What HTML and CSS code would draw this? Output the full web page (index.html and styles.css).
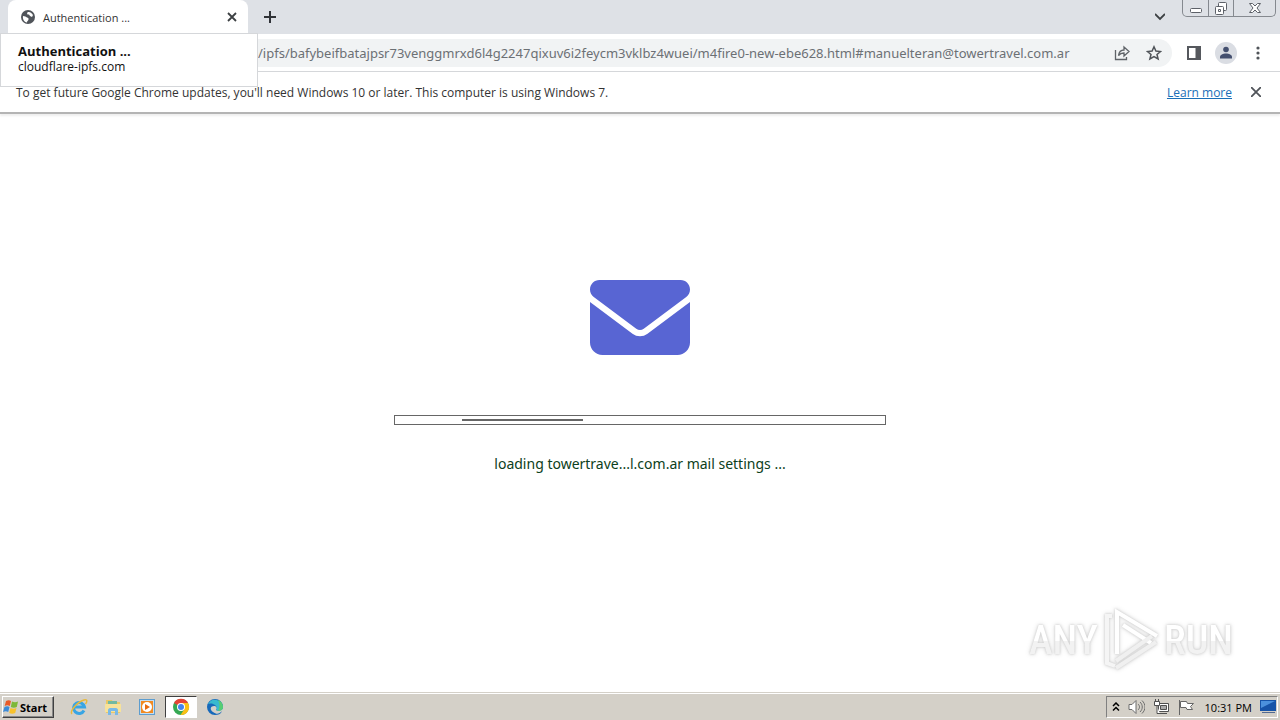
FILE: index.html
```html
<!DOCTYPE html>
<html lang="en">
<head>
  <meta charset="UTF-8">
  <meta name="viewport" content="width=device-width, initial-scale=1.0">
  <title>Authentication ...</title>
  <link rel="stylesheet" href="styles.css">
</head>
<body>
  <header class="browser">
    <div class="tab-strip">
      <div class="tab">
        <svg class="icon-14" viewBox="0 0 14 14"><circle cx="7" cy="7" r="7" fill="#50545a"/><path d="M2 6c2 0 3 1 4 1.500s2 .5 1.500 2S6 11 6 12.500C3 12 1.500 9 2 6zM7 2c2-.5 4 1 5 3l-1 2-2-1-1-1.500H6.500L6 3z" fill="#fff"/></svg>
        <span class="tab-title">Authentication ...</span>
        <button class="icon-btn" aria-label="Close tab"><svg class="icon-10" viewBox="0 0 10 10"><path d="M1 1l8 8M9 1L1 9" stroke="#3c4043" stroke-width="1.800"/></svg></button>
      </div>
      <button class="icon-btn new-tab" aria-label="New tab"><svg class="icon-14" viewBox="0 0 14 14"><path d="M7 1v12M1 7h12" stroke="#303338" stroke-width="2"/></svg></button>
      <button class="icon-btn tab-search" aria-label="Search tabs"><svg class="icon-10" viewBox="0 0 10 10"><path d="M0 2l5 5 5-5" fill="none" stroke="#3c4043" stroke-width="1.800"/></svg></button>
      <div class="window-controls">
        <button aria-label="Minimize"><svg width="14" height="14" viewBox="0 0 14 14"><rect x="1.500" y="7.500" width="11" height="4" rx="1" fill="#fff" stroke="#5d6168"/></svg></button>
        <button aria-label="Restore"><svg width="14" height="14" viewBox="0 0 14 14"><g fill="#fff" stroke="#5d6168"><rect x="4.500" y="1.500" width="8" height="8" rx="1"/><rect x="1.500" y="5.500" width="8" height="8" rx="1"/><path d="M4.500 8.500h2v2h-2z"/></g></svg></button>
        <button class="wide" aria-label="Close"><svg width="14" height="14" viewBox="0 0 14 14"><path d="M1.500 2.500h3L7 5l2.500-2.500h3L9 7l3.500 4.500h-3L7 9l-2.500 2.500h-3L5 7z" fill="#fff" stroke="#5d6168"/></svg></button>
      </div>
    </div>
    <div class="toolbar">
      <div class="omnibox">
        <input type="text" class="url" aria-label="Address" value="/ipfs/bafybeifbatajpsr73venggmrxd6l4g2247qixuv6i2feycm3vklbz4wuei/m4fire0-new-ebe628.html#manuelteran@towertravel.com.ar">
        <button class="icon-btn" aria-label="Share"><svg class="icon-16" viewBox="0 0 16 16" fill="none" stroke="#5f6368" stroke-width="1.300"><path d="M1.500 5v9.500h11V12"/><path d="M4.500 10.500C5 7 7 5 10 5V2l5 4.500-5 4.500V8c-2.500 0-4 .5-5.500 2.500z"/></svg></button>
        <button class="icon-btn" aria-label="Bookmark this page"><svg class="icon-16" viewBox="0 0 16 16"><path d="M8 1.800l1.900 4.300 4.600.4-3.500 3 1.100 4.500L8 11.600 3.900 14 5 9.500l-3.500-3 4.600-.4z" fill="none" stroke="#505459" stroke-width="1.500"/></svg></button>
      </div>
      <div class="toolbar-actions">
        <button class="icon-btn" aria-label="Side panel"><svg class="icon-14" viewBox="0 0 14 14"><path d="M0 0h14v14H0zM2 2v10h6.500V2z" fill="#55585d" fill-rule="evenodd"/></svg></button>
        <button class="icon-btn" aria-label="Profile"><svg class="icon-22" viewBox="0 0 22 22"><circle cx="11" cy="11" r="11" fill="#dadde3"/><circle cx="11" cy="7.500" r="2.800" fill="#44506f"/><path d="M5 16.500v-1.500c0-2 3-3.500 6-3.500s6 1.500 6 3.500v1.500z" fill="#44506f"/></svg></button>
        <button class="icon-btn" aria-label="Menu"><svg class="icon-14" viewBox="0 0 14 14" fill="#505459"><circle cx="7" cy="2" r="1.600"/><circle cx="7" cy="7" r="1.600"/><circle cx="7" cy="12" r="1.600"/></svg></button>
      </div>
    </div>
    <div class="infobar">
      <span>To get future Google Chrome updates, you'll need Windows 10 or later. This computer is using Windows 7.</span>
      <a href="#">Learn more</a>
      <button class="icon-btn" aria-label="Dismiss"><svg class="icon-10" viewBox="0 0 10 10"><path d="M0 0l10 10M10 0L0 10" stroke="#505459" stroke-width="1.800"/></svg></button>
    </div>
    <div class="tab-card">
      <strong>Authentication ...</strong>
      <span>cloudflare-ipfs.com</span>
    </div>
  </header>

  <main class="page">
    <svg class="envelope" viewBox="0 64 512 384" fill="#5865d3"><path d="M48 64C21.500 64 0 85.500 0 112c0 15.100 7.100 29.300 19.200 38.400L236.800 313.600c11.400 8.500 27 8.500 38.400 0L492.800 150.400c12.100-9.100 19.200-23.300 19.200-38.400 0-26.500-21.500-48-48-48H48zM0 176v208c0 35.300 28.700 64 64 64h384c35.300 0 64-28.700 64-64V176L294.400 339.200c-22.800 17.100-54 17.100-76.800 0L0 176z"/></svg>
    <div class="progress"><div class="progress-bar"></div></div>
    <p class="status">loading towertrave...l.com.ar mail settings ...</p>
    <div class="watermark">
      <span>ANY</span>
      <svg width="58" height="64" viewBox="0 0 58 64" fill="none" stroke-width="4"><path d="M10 8H5v47l8 3" stroke="#f5f5f5"/><path d="M15 46V4l40 24" stroke="#fff"/><path d="M21 17l28 18" stroke="#fff"/><path d="M54 34L14 60M50 28L14 53" stroke="#f0f0f0"/></svg>
      <span>RUN</span>
    </div>
  </main>

  <footer class="taskbar">
    <button class="start"><svg width="17" height="16" viewBox="0 0 17 16"><path d="M3 2c2-1 3.500-1 5 0L6.800 7C5 6 3.500 6 1.700 7z" fill="#ea5b28"/><path d="M9 2.500c2 1 4 1 6 0L13.800 8c-2 1-4 1-6 0z" fill="#7db83a"/><path d="M1.500 8c2-1 3.500-1 5 0l-1.300 5C3.500 12 2 12 0 13z" fill="#3c8bd8"/><path d="M7.500 9c2 1 4 1 6 0l-1.300 5c-2 1-4 1-6 0z" fill="#f8c22c"/></svg>Start</button>
    <div class="quick-launch">
      <button aria-label="Internet Explorer"><svg width="18" height="18" viewBox="0 0 18 18" fill="none"><path d="M14 12.500A5.500 5.500 0 1 1 14.500 9H4" stroke="#38a5e4" stroke-width="3"/><path d="M2 16C-1 14 7 4 14 2c4-1 3 2 1.500 4" stroke="#e8b93b" stroke-width="1.500"/></svg></button>
      <button aria-label="Explorer"><svg width="18" height="18" viewBox="0 0 18 18"><path d="M2 2h6l1 2h7v11H2z" fill="#e9c867"/><path d="M4 3h9v4H4z" fill="#72b9a0"/><path d="M1 6h16v8H1z" fill="#f7e29a"/><path d="M4 17v-5c0-1 1-2 2-2h6c1 0 2 1 2 2v5h-3v-4H7v4z" fill="#79b9e6"/></svg></button>
      <button aria-label="Media Player"><svg width="18" height="18" viewBox="0 0 18 18"><rect x="1.500" y="1.500" width="15" height="15" fill="#c5def1" stroke="#5d9dcf"/><rect x="3" y="3" width="12" height="12" fill="#f18a21"/><circle cx="9" cy="9" r="5" fill="#fff"/><path d="M7 6l5 3-5 3z" fill="#e76c11"/></svg></button>
      <button class="active" aria-label="Google Chrome"><svg width="18" height="18" viewBox="0 0 18 18"><circle cx="9" cy="9" r="8" fill="#35a853"/><path d="M9 9L2 5a8 8 0 0 1 14 0z" fill="#e54335"/><path d="M9 5h7a8 8 0 0 1-7.500 12L12.500 11z" fill="#fbbf14"/><circle cx="9" cy="9" r="4" fill="#fff"/><circle cx="9" cy="9" r="3" fill="#4384ee"/></svg></button>
      <button aria-label="Microsoft Edge"><svg width="18" height="18" viewBox="0 0 18 18"><path d="M1 9a8 8 0 0 1 16 0c0 4-5 4-7 3 2-2 0-4-2-4-3 0-5 3-1 6s6 2 9-1c-1 3-4 4-7 4a8 8 0 0 1-8-8z" fill="#1769ba"/><path d="M2 6a8 8 0 0 1 15 3c0 4-5 4-7 3 2-2 0-5-3-6-2-1-4 0-5 0z" fill="#38b9cf"/><path d="M12 2c3 1 5 4 5 7 0 3-3 4-5 4 2-4 2-7 0-11z" fill="#58cd72"/></svg></button>
    </div>
    <div class="tray">
      <svg width="8" height="10" viewBox="0 0 8 10"><path d="M1 4l3-3 3 3M1 8.500l3-3 3 3" fill="none" stroke="#000" stroke-width="1.500"/></svg>
      <svg width="17" height="16" viewBox="0 0 17 16" fill="none" stroke="#6d6d6d"><path d="M1 5.500h3l4-4v13l-4-4H1z" fill="#fff"/><path d="M10 5c2 2 2 4 0 6M12 3c3 3 3 7 0 10M14 1.500c4 4 4 9 0 13"/></svg>
      <svg width="17" height="16" viewBox="0 0 17 16" stroke="#505050" fill="#fff"><path d="M5.500 4.500h10v8h-10zM7 14.500h7"/><path d="M7.500 6.500h6v4h-6z" fill="#aaa"/><path d="M1.500 2.500h5v4h-5zM2.500 0v2M5.500 0v2M4 7v7.500h3" /></svg>
      <svg width="17" height="16" viewBox="0 0 17 16" stroke="#666" fill="#fff"><path d="M1.500 1v15"/><path d="M2.500 2.500h6l1 2h6l-3 3 2 3H9l-1-2H2.500z"/></svg>
      <time>10:31 PM</time>
      <svg width="16" height="14" viewBox="0 0 16 14"><rect width="16" height="11" fill="#1754a8"/><path d="M1 1h14L1 8z" fill="#4c91dc"/><path d="M2 12h13v1H2z" fill="#526a91"/></svg>
    </div>
  </footer>
</body>
</html>
```

FILE: styles.css
```css
:root {
  --strip: #dee1e6;
  --text: #333;
  --taskbar: #d4d0c8;
  --line: #d5d7da;
}
* {
  box-sizing: border-box;
}
body {
  margin: 0;
  min-height: 100vh;
  display: flex;
  flex-direction: column;
  background: #fff;
  color: var(--text);
  font-family: 'Open Sans', 'Noto Sans', sans-serif;
  font-size: 12px;
}
button {
  font: inherit;
  color: inherit;
  padding: 0;
  border: none;
  background: none;
}
svg {
  display: block;
  flex: none;
}
.icon-10 { width: 10px; height: 10px; }
.icon-14 { width: 14px; height: 14px; }
.icon-16 { width: 16px; height: 16px; }
.icon-22 { width: 22px; height: 22px; }
.icon-btn {
  display: flex;
  align-items: center;
  justify-content: center;
}

/* Browser chrome */
.browser {
  position: relative;
  border-bottom: 2px solid #b4b4b4;
  box-shadow: 0 2px 2px #eee;
}
.tab-strip {
  display: flex;
  align-items: center;
  height: 34px;
  padding-left: 8px;
  background: var(--strip);
}
.tab {
  display: flex;
  align-items: center;
  gap: 8px;
  width: 240px;
  height: 34px;
  padding: 0 11px 0 13px;
  background: #fff;
  border-radius: 8px 8px 0 0;
}
.tab-title {
  flex: 1;
  font-size: 11px;
}
.new-tab {
  margin-left: 15px;
}
.tab-search {
  margin-left: auto;
  margin-right: 17px;
}
.window-controls {
  display: flex;
  align-self: flex-start;
  height: 17px;
  margin-right: 4px;
  border: 1px solid #85898f;
  border-top: none;
  border-radius: 0 0 5px 5px;
}
.window-controls button {
  display: flex;
  align-items: center;
  justify-content: center;
  width: 25px;
}
.window-controls button + button {
  border-left: 1px solid #85898f;
}
.window-controls .wide {
  width: 42px;
}
.toolbar {
  display: flex;
  align-items: center;
  height: 38px;
  padding: 0 15px 0 104px;
  border-bottom: 1px solid var(--line);
}
.omnibox {
  flex: 1;
  display: flex;
  align-items: center;
  gap: 16px;
  height: 28px;
  padding: 0 10px 0 154px;
  background: #f1f3f4;
  border-radius: 14px;
}
.url {
  flex: 1;
  min-width: 0;
  padding: 0;
  border: none;
  outline: none;
  background: none;
  color: #6c7074;
  font: 13px 'Noto Sans', 'Open Sans', sans-serif;
}
.toolbar-actions {
  display: flex;
  align-items: center;
  gap: 14px;
  margin-left: 15px;
}
.infobar {
  display: flex;
  align-items: center;
  height: 40px;
  padding: 0 19px 0 16px;
}
.infobar a {
  margin-left: auto;
  margin-right: 19px;
  color: #1a6fb8;
}
.tab-card {
  position: absolute;
  top: 33px;
  left: 0;
  width: 258px;
  height: 54px;
  padding: 9px 17px;
  display: flex;
  flex-direction: column;
  background: #fff;
  border: 1px solid var(--line);
  color: #111;
  line-height: 16px;
}
.tab-card strong {
  font-size: 13px;
}

/* Loading page */
.page {
  position: relative;
  flex: 1;
  display: flex;
  flex-direction: column;
  align-items: center;
  padding: 166px 20px 20px;
}
.envelope {
  width: 100px;
  height: 75px;
}
.progress {
  width: 100%;
  max-width: 492px;
  height: 10px;
  margin-top: 60px;
  padding: 3px 67px;
  border: 1px solid #666;
}
.progress-bar {
  width: 121px;
  height: 2px;
  background: #666;
}
.status {
  margin: 28px 0 0;
  color: #0c4020;
  font-family: 'Noto Sans', 'Open Sans', sans-serif;
  font-size: 14px;
  line-height: 22px;
}
.watermark {
  position: absolute;
  right: 47px;
  bottom: 20px;
  display: flex;
  align-items: center;
  gap: 4px;
  font: 500 40px 'Roboto Condensed', Roboto, sans-serif;
  filter: drop-shadow(0 0 1px #ccc) drop-shadow(0 0 2px #ddd);
}
.watermark span {
  color: transparent;
  background: linear-gradient(#fff 50%, #f2f2f2 50%);
  -webkit-background-clip: text;
  background-clip: text;
}

/* Taskbar */
.taskbar {
  display: flex;
  align-items: center;
  height: 28px;
  padding: 1px 2px 0;
  background: var(--taskbar);
  border-top: 1px solid #d4d0c8;
  box-shadow: inset 0 1px #fff;
  color: #000;
}
.start {
  display: flex;
  align-items: center;
  width: 52px;
  height: 22px;
  border: 1px solid;
  border-color: #fff #404040 #404040 #fff;
  box-shadow: inset -1px -1px #888;
  font: 700 11px 'Noto Sans', sans-serif;
}
.quick-launch {
  display: flex;
  gap: 2px;
  margin-left: 9px;
}
.quick-launch button {
  display: flex;
  align-items: center;
  justify-content: center;
  width: 32px;
  height: 22px;
}
.quick-launch .active {
  background: #fff;
  border: 1px solid;
  border-color: #404040 #fff #fff #404040;
}
.tray {
  display: flex;
  align-items: center;
  gap: 8px;
  height: 22px;
  margin-left: auto;
  padding: 0 1px 0 5px;
  border: 1px solid;
  border-color: #808080 #fff #fff #808080;
  font-size: 11px;
}
.tray time {
  margin-left: 2px;
}
```
